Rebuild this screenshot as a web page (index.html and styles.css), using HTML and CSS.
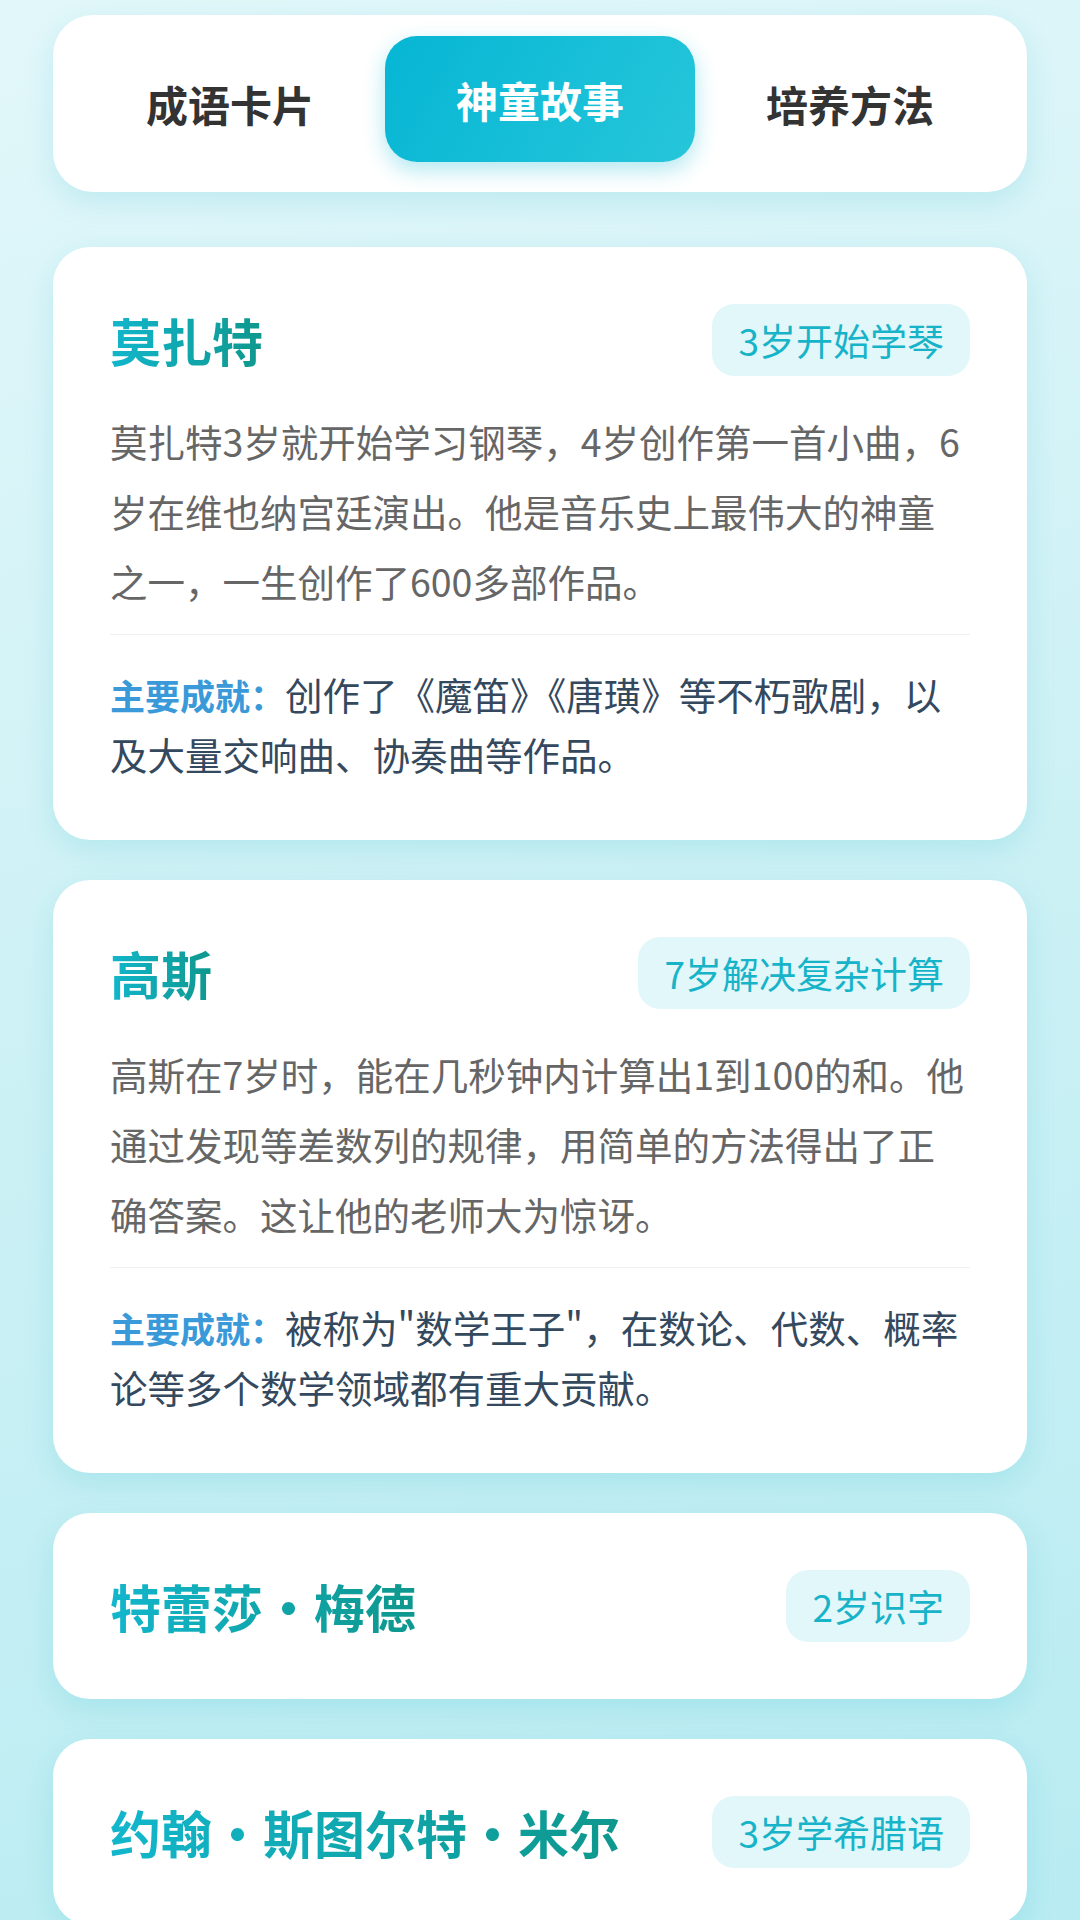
FILE: index.html
```html
<!DOCTYPE html>
<html lang="zh-CN">
<head>
<meta charset="UTF-8">
<title>神童故事</title>
<link rel="stylesheet" href="styles.css">
</head>
<body>
<div class="page">
  <nav class="tabs">
    <div class="tab">成语卡片</div>
    <div class="tab active">神童故事</div>
    <div class="tab">培养方法</div>
  </nav>

  <section class="card">
    <div class="card-head">
      <h2 class="name">莫扎特</h2>
      <span class="badge">3岁开始学琴</span>
    </div>
    <p class="desc">莫扎特3岁就开始学习钢琴，4岁创作第一首小曲，6岁在维也纳宫廷演出。他是音乐史上最伟大的神童之一，一生创作了600多部作品。</p>
    <p class="achieve"><span class="label">主要成就：</span>创作了《魔笛》《唐璜》等不朽歌剧，以及大量交响曲、协奏曲等作品。</p>
  </section>

  <section class="card">
    <div class="card-head">
      <h2 class="name">高斯</h2>
      <span class="badge">7岁解决复杂计算</span>
    </div>
    <p class="desc">高斯在7岁时，能在几秒钟内计算出1到100的和。他通过发现等差数列的规律，用简单的方法得出了正确答案。这让他的老师大为惊讶。</p>
    <p class="achieve"><span class="label">主要成就：</span>被称为"数学王子"，在数论、代数、概率论等多个数学领域都有重大贡献。</p>
  </section>

  <section class="card">
    <div class="card-head">
      <h2 class="name">特蕾莎・梅德</h2>
      <span class="badge">2岁识字</span>
    </div>
  </section>

  <section class="card">
    <div class="card-head">
      <h2 class="name">约翰・斯图尔特・米尔</h2>
      <span class="badge">3岁学希腊语</span>
    </div>
  </section>
</div>
</body>
</html>
```

FILE: styles.css
```css
* {
  box-sizing: border-box;
}

html, body {
  margin: 0;
  padding: 0;
}

body {
  width: 1080px;
  height: 1920px;
  overflow: hidden;
  font-family: "Noto Sans CJK SC", "Noto Sans", sans-serif;
  text-spacing-trim: space-all;
  background: linear-gradient(165deg, #e2f7fa 0%, #ccf1f5 50%, #b8ecf2 100%);
}

.page {
  padding: 15px 53px 0;
  display: flex;
  flex-direction: column;
}

.tabs {
  display: flex;
  background: #ffffff;
  border-radius: 40px;
  padding: 25px 22px 26px;
  box-shadow: 0 10px 30px rgba(0, 172, 193, 0.14);
  margin-bottom: 55px;
}

.tab {
  flex: 1;
  height: 126px;
  display: flex;
  align-items: center;
  justify-content: center;
  font-size: 42px;
  font-weight: 700;
  color: #333333;
  border-radius: 32px;
}

.tab.active {
  color: #ffffff;
  background: linear-gradient(120deg, #06b6d4 0%, #26c6da 100%);
  box-shadow: 0 8px 22px rgba(6, 182, 212, 0.32);
  transform: translateY(-4px);
}

.card {
  background: #ffffff;
  border-radius: 37px;
  padding: 57px;
  box-shadow: 0 10px 30px rgba(0, 172, 193, 0.14);
  margin-bottom: 40px;
}

.card-head {
  display: flex;
  align-items: center;
  justify-content: space-between;
  height: 72px;
}

.name {
  margin: 0;
  font-size: 51px;
  font-weight: 700;
  line-height: 72px;
  background: linear-gradient(90deg, #12b6cc 0%, #0e978d 100%);
  -webkit-background-clip: text;
  background-clip: text;
  color: transparent;
}

.badge {
  height: 72px;
  line-height: 72px;
  padding: 0 26px;
  border-radius: 22px;
  background: #e2f7fa;
  color: #17b3c8;
  font-size: 37px;
  white-space: nowrap;
}

.desc {
  margin: 30px 0 18px;
  font-size: 37.5px;
  line-height: 70px;
  color: #666666;
}

.achieve {
  margin: 0;
  border-top: 1px solid #eef1f4;
  padding-top: 29px;
  font-size: 37.5px;
  line-height: 59px;
  color: #34495e;
  text-spacing-trim: normal;
}

.label {
  font-size: 35px;
  font-weight: 700;
  color: #3a9ad9;
}
```
